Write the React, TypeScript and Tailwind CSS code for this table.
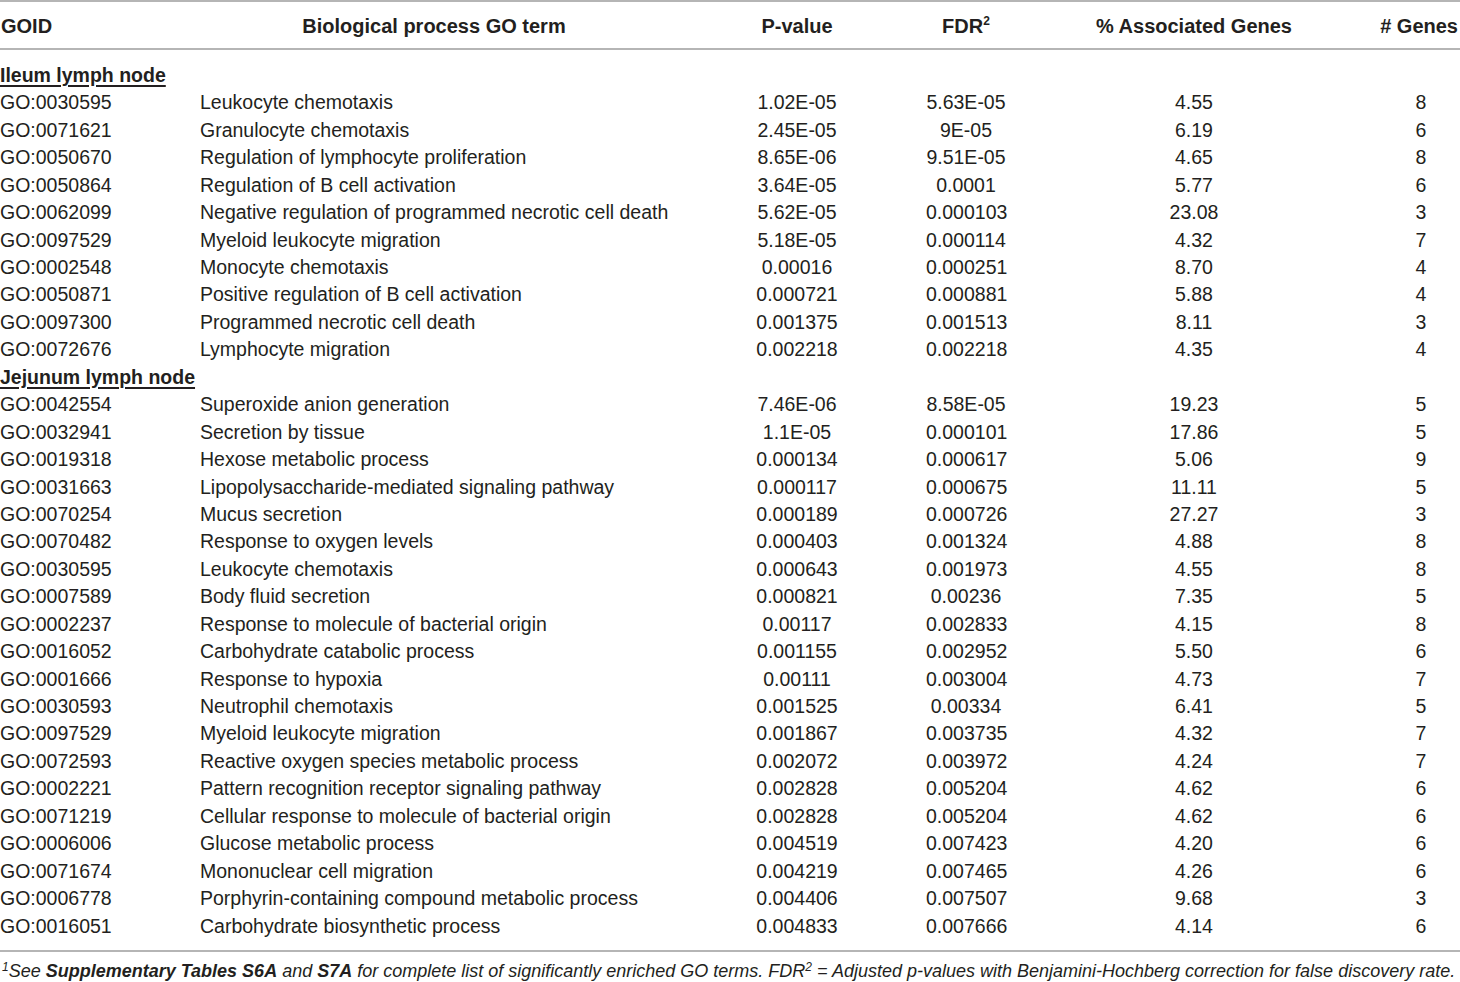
const ileum = [
  ["GO:0030595", "Leukocyte chemotaxis", "1.02E-05", "5.63E-05", "4.55", "8"],
  ["GO:0071621", "Granulocyte chemotaxis", "2.45E-05", "9E-05", "6.19", "6"],
  ["GO:0050670", "Regulation of lymphocyte proliferation", "8.65E-06", "9.51E-05", "4.65", "8"],
  ["GO:0050864", "Regulation of B cell activation", "3.64E-05", "0.0001", "5.77", "6"],
  ["GO:0062099", "Negative regulation of programmed necrotic cell death", "5.62E-05", "0.000103", "23.08", "3"],
  ["GO:0097529", "Myeloid leukocyte migration", "5.18E-05", "0.000114", "4.32", "7"],
  ["GO:0002548", "Monocyte chemotaxis", "0.00016", "0.000251", "8.70", "4"],
  ["GO:0050871", "Positive regulation of B cell activation", "0.000721", "0.000881", "5.88", "4"],
  ["GO:0097300", "Programmed necrotic cell death", "0.001375", "0.001513", "8.11", "3"],
  ["GO:0072676", "Lymphocyte migration", "0.002218", "0.002218", "4.35", "4"],
];

const jejunum = [
  ["GO:0042554", "Superoxide anion generation", "7.46E-06", "8.58E-05", "19.23", "5"],
  ["GO:0032941", "Secretion by tissue", "1.1E-05", "0.000101", "17.86", "5"],
  ["GO:0019318", "Hexose metabolic process", "0.000134", "0.000617", "5.06", "9"],
  ["GO:0031663", "Lipopolysaccharide-mediated signaling pathway", "0.000117", "0.000675", "11.11", "5"],
  ["GO:0070254", "Mucus secretion", "0.000189", "0.000726", "27.27", "3"],
  ["GO:0070482", "Response to oxygen levels", "0.000403", "0.001324", "4.88", "8"],
  ["GO:0030595", "Leukocyte chemotaxis", "0.000643", "0.001973", "4.55", "8"],
  ["GO:0007589", "Body fluid secretion", "0.000821", "0.00236", "7.35", "5"],
  ["GO:0002237", "Response to molecule of bacterial origin", "0.00117", "0.002833", "4.15", "8"],
  ["GO:0016052", "Carbohydrate catabolic process", "0.001155", "0.002952", "5.50", "6"],
  ["GO:0001666", "Response to hypoxia", "0.00111", "0.003004", "4.73", "7"],
  ["GO:0030593", "Neutrophil chemotaxis", "0.001525", "0.00334", "6.41", "5"],
  ["GO:0097529", "Myeloid leukocyte migration", "0.001867", "0.003735", "4.32", "7"],
  ["GO:0072593", "Reactive oxygen species metabolic process", "0.002072", "0.003972", "4.24", "7"],
  ["GO:0002221", "Pattern recognition receptor signaling pathway", "0.002828", "0.005204", "4.62", "6"],
  ["GO:0071219", "Cellular response to molecule of bacterial origin", "0.002828", "0.005204", "4.62", "6"],
  ["GO:0006006", "Glucose metabolic process", "0.004519", "0.007423", "4.20", "6"],
  ["GO:0071674", "Mononuclear cell migration", "0.004219", "0.007465", "4.26", "6"],
  ["GO:0006778", "Porphyrin-containing compound metabolic process", "0.004406", "0.007507", "9.68", "3"],
  ["GO:0016051", "Carbohydrate biosynthetic process", "0.004833", "0.007666", "4.14", "6"],
];

const cols = "grid grid-cols-[200px_468px_258px_80px_376px_78px]";

function Row({ r }: { r: string[] }) {
  return (
    <div className={`${cols} h-[27.45px] items-center`}>
      <div>{r[0]}</div>
      <div className="whitespace-nowrap">{r[1]}</div>
      <div className="text-center">{r[2]}</div>
      <div className="text-center">{r[3]}</div>
      <div className="text-center">{r[4]}</div>
      <div className="text-center">{r[5]}</div>
    </div>
  );
}

function Section({ title }: { title: string }) {
  return (
    <div className="h-[27.45px] flex items-center font-bold underline underline-offset-[3px] decoration-[1.5px]">
      {title}
    </div>
  );
}

export default function App() {
  return (
    <div className="w-[1460px] h-[982px] bg-white text-[#231f20] font-['Liberation_Sans',Arial,sans-serif] text-[19.5px] leading-none">
      <div className="border-t-2 border-[#b5b5b5]" />
      <div className={`${cols} h-[48px] items-center font-bold text-[20px] border-b-2 border-[#b5b5b5] pt-[1px]`}>
        <div className="pl-[1px]">GOID</div>
        <div className="text-center whitespace-nowrap">Biological process GO term</div>
        <div className="text-center">P-value</div>
        <div className="text-center">
          FDR<sup className="text-[12px] -top-[8px]">2</sup>
        </div>
        <div className="text-center whitespace-nowrap">% Associated Genes</div>
        <div className="flex justify-end pr-[2px] whitespace-nowrap">
          <span>#&nbsp;Genes</span>
        </div>
      </div>
      <div className="pt-[12px] pb-[10px] border-b-2 border-[#b5b5b5]">
        <Section title="Ileum lymph node" />
        {ileum.map((r, i) => (
          <Row key={"i" + i} r={r} />
        ))}
        <Section title="Jejunum lymph node" />
        {jejunum.map((r, i) => (
          <Row key={"j" + i} r={r} />
        ))}
      </div>
      <p className="pt-[10px] pl-[2px] italic text-[18px] whitespace-nowrap">
        <sup className="text-[12px]">1</sup>See <b>Supplementary Tables S6A</b> and <b>S7A</b> for complete list of
        significantly enriched GO terms. FDR<sup className="text-[12px]">2</sup> = Adjusted p-values with
        Benjamini-Hochberg correction for false discovery rate.
      </p>
    </div>
  );
}
